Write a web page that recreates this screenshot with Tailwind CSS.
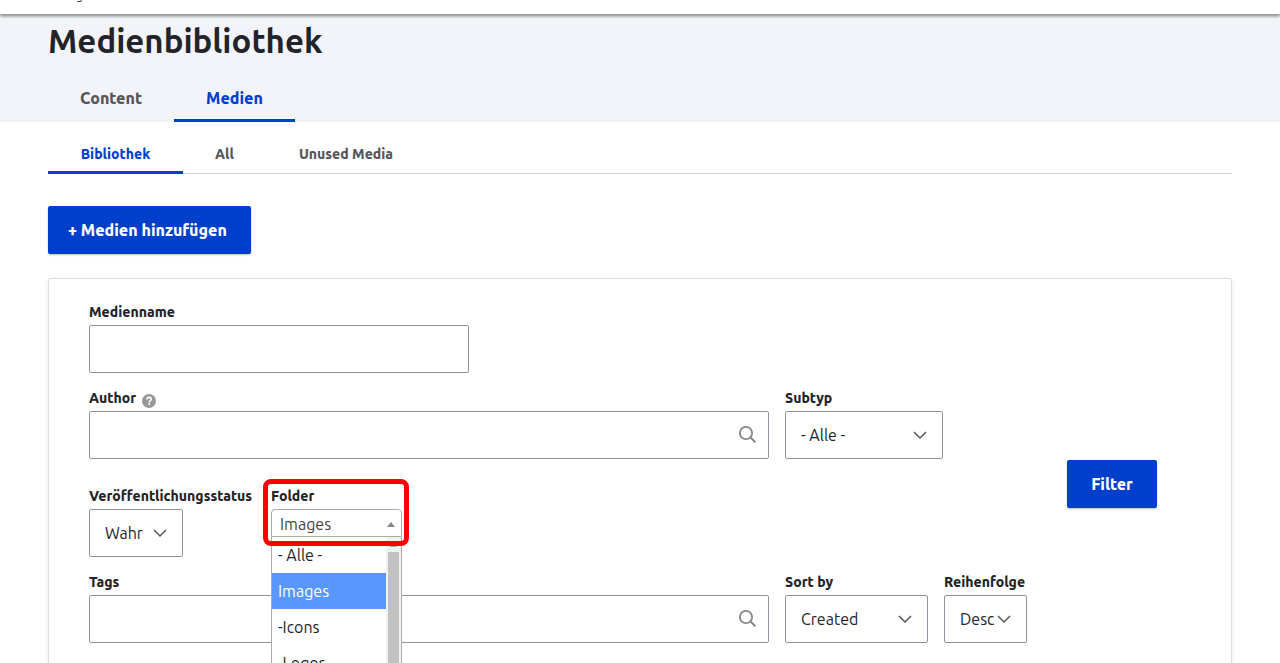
<!DOCTYPE html>
<html lang="de">
<head>
<meta charset="utf-8">
<meta name="viewport" content="width=device-width, initial-scale=1">
<title>Medienbibliothek</title>
<script src="https://cdn.jsdelivr.net/npm/@tailwindcss/browser@4"></script>
</head>
<body class="h-screen overflow-hidden bg-white font-['Ubuntu','Noto_Sans','Open_Sans',sans-serif] text-base text-[#232429]">

<svg class="hidden" aria-hidden="true">
  <symbol id="chevron" viewBox="0 0 14 9"><path d="M1 1l6 6 6-6" fill="none" stroke="#55565b" stroke-width="1.5"/></symbol>
  <symbol id="search" viewBox="0 0 17 17"><circle cx="7" cy="7" r="6.1" fill="none" stroke="#868686" stroke-width="1.8"/><path d="M11.3 11.3l5 5" fill="none" stroke="#868686" stroke-width="2"/></symbol>
</svg>

<div class="relative flex h-[14px] flex-col justify-end overflow-hidden bg-white pl-[76px] shadow-[0_1px_0_#a3a3a3,0_2px_3px_0_rgba(0,0,0,0.5)]">
  <span class="mb-[10px] text-xs leading-4 text-[#232429]">g</span>
</div>

<header class="bg-[#f3f4f9] px-12 pt-2">
  <h1 class="h-[52px] text-[33px] leading-[38px] font-bold">Medienbibliothek</h1>
  <nav aria-label="Haupt-Tabs" class="flex text-center font-extrabold">
    <a href="#" class="h-12 w-[126px] border-b-[3px] border-transparent leading-[48px] text-[#55565b]">Content</a>
    <a href="#" aria-current="page" class="h-12 w-[121px] border-b-[3px] border-[#003ecc] leading-[48px] text-[#003ecc]">Medien</a>
  </nav>
</header>

<main class="px-12">
  <nav aria-label="Unter-Tabs" class="mt-3 flex h-10 border-b border-[#d3d4d9] text-center text-sm font-extrabold">
    <a href="#" aria-current="page" class="h-10 w-[135px] border-b-[3px] border-[#003ecc] leading-10 text-[#003ecc]">Bibliothek</a>
    <a href="#" class="w-[83px] leading-10 text-[#55565b]">All</a>
    <a href="#" class="w-[160px] leading-10 text-[#55565b]">Unused Media</a>
  </nav>

  <a href="#" class="mt-8 flex h-12 w-[203px] items-center rounded-xs bg-[#003ecc] pl-5 font-extrabold whitespace-nowrap text-white shadow-[0_1px_2px_rgba(0,0,0,0.25)]">+ Medien hinzufügen</a>

  <form class="mt-6 flex items-center gap-10 rounded-xs border border-[#dedfe4] px-10 pt-6 pb-16 shadow-[0_2px_4px_rgba(0,0,0,0.1)]">
    <div class="flex w-[938px] flex-col pb-[22px] text-sm leading-[18px] font-extrabold">
      <div class="flex flex-col gap-1">
        <label for="name">Medienname</label>
        <input id="name" type="text" class="h-12 w-[380px] rounded-xs border border-[#8e929c] px-4 text-base font-normal">
      </div>

      <div class="mt-4 flex gap-4">
        <div class="flex w-[680px] flex-col gap-1">
          <div class="flex h-[18px] items-center gap-[6px]">
            <label for="author">Author</label>
            <svg role="img" aria-label="Hilfe" class="mt-[6px] size-[14px]" viewBox="0 0 13 13"><circle cx="6.5" cy="6.5" r="6.5" fill="#999"/><path d="M4.6 5.1C4.6 3.7 5.4 3.1 6.6 3.1S8.6 3.8 8.6 4.9C8.6 6.2 6.7 6.2 6.7 7.8" fill="none" stroke="#fff" stroke-width="1.5"/><path d="M5.9 8.7h1.6v1.5H5.9z" fill="#fff"/></svg>
          </div>
          <div class="relative">
            <input id="author" type="text" class="block h-12 w-full rounded-xs border border-[#8e929c] px-4 text-base font-normal">
            <svg class="absolute top-[15px] right-[13px] size-[17px]"><use href="#search"/></svg>
          </div>
        </div>
        <div class="flex flex-col gap-1">
          <label for="type">Subtyp</label>
          <div class="relative w-[158px]">
            <select id="type" class="block h-12 w-full appearance-none rounded-xs border border-[#8e929c] pl-[15px] text-base font-normal"><option>- Alle -</option></select>
            <svg class="pointer-events-none absolute top-5 right-4 h-[9px] w-[14px]"><use href="#chevron"/></svg>
          </div>
        </div>
      </div>

      <div class="mt-7 flex gap-4">
        <div class="flex w-[166px] flex-col gap-1">
          <label for="status" class="whitespace-nowrap">Veröffentlichungsstatus</label>
          <div class="relative w-[94px]">
            <select id="status" class="block h-12 w-full appearance-none rounded-xs border border-[#8e929c] pl-[15px] text-base font-normal"><option>Wahr</option></select>
            <svg class="pointer-events-none absolute top-5 right-4 h-[9px] w-[14px]"><use href="#chevron"/></svg>
          </div>
        </div>
        <div class="relative flex w-[131px] flex-col gap-1">
          <span id="folder-label">Folder</span>
          <button type="button" aria-labelledby="folder-label folder" aria-haspopup="listbox" aria-expanded="true" id="folder" class="flex h-7 items-center justify-between rounded-t border border-[#aaa] bg-white pt-0.5 pr-[6px] pl-2 text-base font-normal text-[#444]">Images
            <svg class="h-[5px] w-2" viewBox="0 0 8 5"><path d="M0 5l4-5 4 5z" fill="#888"/></svg>
          </button>
          <div class="absolute top-[50px] left-0 z-10 flex h-[200px] w-full border-x border-b border-[#aaa] bg-white">
            <ul role="listbox" aria-labelledby="folder-label" class="flex-1 overflow-hidden text-base leading-9 font-normal whitespace-nowrap">
              <li role="option" class="pl-[6px]">- Alle -</li>
              <li role="option" aria-selected="true" class="bg-[#5897fb] pl-[6px] text-white">Images</li>
              <li role="option" class="pl-[6px]">-Icons</li>
              <li role="option" class="pl-[6px]">-Logos</li>
            </ul>
            <div class="flex w-[15px] flex-col items-center gap-[5px] bg-[#f1f1f1] pt-[6px]">
              <svg class="h-1 w-[7px] shrink-0" viewBox="0 0 7 4"><path d="M0 4l3.5-4L7 4z" fill="#a3a3a3"/></svg>
              <div class="w-[11px] flex-1 bg-[#c1c1c1]"></div>
            </div>
          </div>
          <div class="pointer-events-none absolute -top-2 -left-2 z-20 h-[67px] w-[146px] rounded-lg border-5 border-[#fe0000]"></div>
        </div>
      </div>

      <div class="mt-4 flex gap-4">
        <div class="flex w-[680px] flex-col gap-1">
          <label for="tags">Tags</label>
          <div class="relative">
            <input id="tags" type="text" class="block h-12 w-full rounded-xs border border-[#8e929c] px-4 text-base font-normal">
            <svg class="absolute top-[15px] right-[13px] size-[17px]"><use href="#search"/></svg>
          </div>
        </div>
        <div class="flex flex-col gap-1">
          <label for="sort">Sort by</label>
          <div class="relative w-[143px]">
            <select id="sort" class="block h-12 w-full appearance-none rounded-xs border border-[#8e929c] pl-[15px] text-base font-normal"><option>Created</option></select>
            <svg class="pointer-events-none absolute top-5 right-4 h-[9px] w-[14px]"><use href="#chevron"/></svg>
          </div>
        </div>
        <div class="flex w-[83px] flex-col gap-1">
          <label for="order">Reihenfolge</label>
          <div class="relative">
            <select id="order" class="block h-12 w-full appearance-none rounded-xs border border-[#8e929c] pl-[15px] text-base font-normal"><option>Desc</option></select>
            <svg class="pointer-events-none absolute top-5 right-4 h-[9px] w-[14px]"><use href="#chevron"/></svg>
          </div>
        </div>
      </div>
    </div>
    <button type="submit" class="h-12 w-[90px] rounded-xs bg-[#003ecc] font-extrabold text-white shadow-[0_1px_2px_rgba(0,0,0,0.25)]">Filter</button>
  </form>
</main>
</body>
</html>
